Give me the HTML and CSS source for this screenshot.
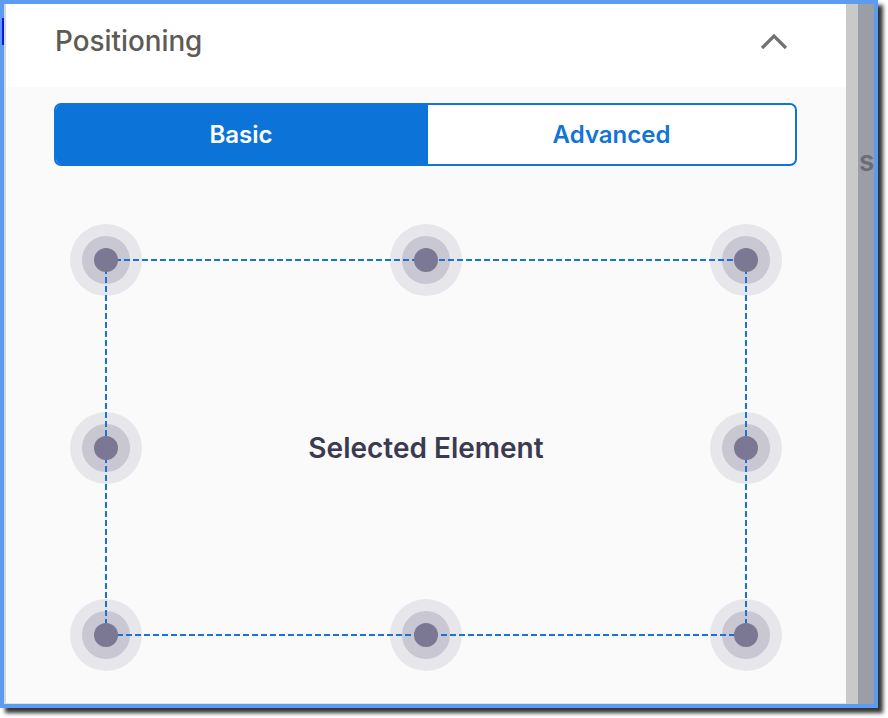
FILE: index.html
```html
<!DOCTYPE html>
<html>
<head>
<meta charset="utf-8">
<link rel="stylesheet" href="styles.css">
</head>
<body>
<div class="frame">
  <span class="stray"></span>
  <section class="panel">
    <header class="panel-head">
      <h2 class="title">Positioning</h2>
      <svg class="chevron" width="28" height="16" viewBox="0 0 28 16"><polyline points="2,14 14,2 26,14" fill="none" stroke="#727272" stroke-width="3.2"/></svg>
    </header>
    <div class="panel-body">
      <div class="toggle">
        <button class="seg seg-active">Basic</button>
        <button class="seg">Advanced</button>
      </div>
      <div class="diagram">
        <svg class="outline" width="642" height="377" viewBox="0 0 642 377"><rect x="1" y="1" width="640" height="375" fill="none" stroke="#1873d6" stroke-width="2" stroke-dasharray="6 3"/></svg>
        <div class="handle"><div class="ring"><div class="dot"></div></div></div>
        <div class="handle mid-col"><div class="ring"><div class="dot"></div></div></div>
        <div class="handle"><div class="ring"><div class="dot"></div></div></div>
        <div class="handle mid-row"><div class="ring"><div class="dot"></div></div></div>
        <div class="label">Selected Element</div>
        <div class="handle mid-row"><div class="ring"><div class="dot"></div></div></div>
        <div class="handle"><div class="ring"><div class="dot"></div></div></div>
        <div class="handle mid-col"><div class="ring"><div class="dot"></div></div></div>
        <div class="handle"><div class="ring"><div class="dot"></div></div></div>
      </div>
    </div>
  </section>
  <div class="gutter"></div>
  <div class="side"><span class="side-text">s</span></div>
</div>
</body>
</html>
```
FILE: styles.css
```css
html, body {
  margin: 0;
  padding: 0;
  background: #ffffff;
}
body {
  font-family: Inter, "Noto Sans", sans-serif;
  width: 888px;
  height: 718px;
  overflow: hidden;
}
.frame {
  position: relative;
  width: 870px;
  height: 700px;
  border: 4px solid #5b9bf0;
  box-shadow: 5px 5px 4px rgba(0, 0, 0, 0.8);
  display: flex;
  background: #fafafa;
}
.stray {
  position: absolute;
  left: -2px;
  top: 14px;
  width: 2px;
  height: 27px;
  background: #1010f0;
}
.panel {
  width: 840px;
  border-left: 2px solid #d6d6d6;
  border-bottom: 1px solid #e2e2e2;
  background: #fafafa;
  display: flex;
  flex-direction: column;
}
.panel-head {
  height: 74px;
  padding: 0 58px 9px 49px;
  background: #ffffff;
  display: flex;
  align-items: center;
  justify-content: space-between;
}
.title {
  margin: 0;
  font-size: 27.8px;
  font-weight: 500;
  color: #5d5b54;
}
.chevron {
  display: block;
  margin-top: 1px;
}
.panel-body {
  padding: 16px 0 0 48px;
}
.toggle {
  width: 739px;
  height: 59px;
  border: 2px solid #0f74d8;
  border-radius: 7px;
  overflow: hidden;
  display: flex;
  background: #ffffff;
}
.seg {
  flex: 1;
  border: none;
  margin: 0;
  padding: 0;
  background: transparent;
  font-family: Inter, "Noto Sans", sans-serif;
  font-size: 24px;
  font-weight: 600;
  color: #1274d6;
}
.seg-active {
  flex: 0 0 370px;
  margin-right: 2px;
  background: #0c74d9;
  color: #ffffff;
  box-shadow: 2px 0 0 #0c74d9;
}
.diagram {
  position: relative;
  z-index: 0;
  margin: 58px 0 0 16px;
  width: 712px;
  height: 447px;
  display: grid;
  grid-template-columns: 72px 1fr 72px;
  grid-template-rows: 72px 1fr 72px;
}
.outline {
  position: absolute;
  left: 35px;
  top: 35px;
  z-index: 1;
}
.handle {
  width: 72px;
  height: 72px;
  border-radius: 50%;
  background: #e7e6eb;
  display: flex;
  align-items: center;
  justify-content: center;
}
.mid-col {
  justify-self: center;
}
.mid-row {
  align-self: center;
}
.ring {
  width: 48px;
  height: 48px;
  border-radius: 50%;
  background: #c9c7d2;
  display: flex;
  align-items: center;
  justify-content: center;
}
.dot {
  position: relative;
  z-index: 2;
  width: 24px;
  height: 24px;
  border-radius: 50%;
  background: #7a7892;
}
.label {
  align-self: center;
  justify-self: center;
  font-size: 28px;
  font-weight: 600;
  color: #3b3a50;
}
.gutter {
  width: 12px;
  background: #c9c9c9;
}
.side {
  width: 16px;
  background: #9b9da7;
  overflow: hidden;
}
.side-text {
  display: block;
  margin: 140px 0 0 1px;
  font-size: 28px;
  font-weight: 600;
  color: #6b6d76;
}
```
